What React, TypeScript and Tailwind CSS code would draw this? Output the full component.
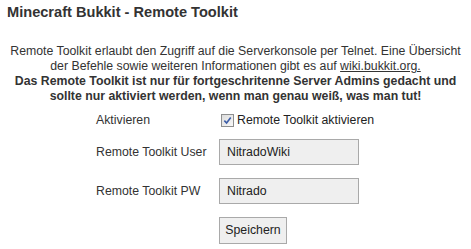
export default function App() {
  return (
    <div className="w-[471px] h-[249px] bg-white text-[#333] font-['Liberation_Sans',Arial,sans-serif] overflow-hidden">
      <h1 className="px-[7px] pt-[3px] text-[14.6px] font-bold leading-[18px]">Minecraft Bukkit - Remote Toolkit</h1>
      <p className="mt-[23px] text-center text-[12.3px] leading-[15px] px-[2px]">
        Remote Toolkit erlaubt den Zugriff auf die Serverkonsole per Telnet. Eine Übersicht
        <br />
        der Befehle sowie weiteren Informationen gibt es auf{" "}
        <a href="#" className="underline">wiki.bukkit.org.</a>
        <br />
        <b>
          Das Remote Toolkit ist nur für fortgeschritenne Server Admins gedacht und
          <br />
          sollte nur aktiviert werden, wenn man genau weiß, was man tut!
        </b>
      </p>
      <div className="mt-[8px] ml-[96px] flex flex-col text-[12.3px]">
        <div className="flex items-center h-[16px]">
          <div className="w-[123px]">Aktivieren</div>
          <label className="flex items-center gap-[3px] text-[#222]">
            <span className="ml-[2px] w-[13px] h-[13px] border border-[#8e8f8f] bg-gradient-to-br from-[#dcdcdc] to-[#f8f8f8] flex items-center justify-center">
              <svg viewBox="0 0 10 10" className="w-[9px] h-[9px]">
                <path d="M1.5 5.2 L4 7.8 L8.6 1.6" fill="none" stroke="#3d5ea8" strokeWidth="1.8" />
              </svg>
            </span>
            Remote Toolkit aktivieren
          </label>
        </div>
        <div className="flex items-center mt-[11px]">
          <div className="w-[123px]">Remote Toolkit User</div>
          <input defaultValue="NitradoWiki" className="w-[140px] h-[26px] bg-[#efefef] border border-[#a9a9a9] px-[7px] text-[12.3px] text-[#222] outline-none" />
        </div>
        <div className="flex items-center mt-[13px]">
          <div className="w-[123px]">Remote Toolkit PW</div>
          <input defaultValue="Nitrado" className="w-[140px] h-[26px] bg-[#efefef] border border-[#a9a9a9] px-[7px] text-[12.3px] text-[#222] outline-none" />
        </div>
        <div className="flex mt-[13px] pl-[123px]">
          <button className="w-[68px] h-[27px] bg-[#efefef] border border-[#a9a9a9] text-[12.3px] text-[#222]">Speichern</button>
        </div>
      </div>
    </div>
  );
}
